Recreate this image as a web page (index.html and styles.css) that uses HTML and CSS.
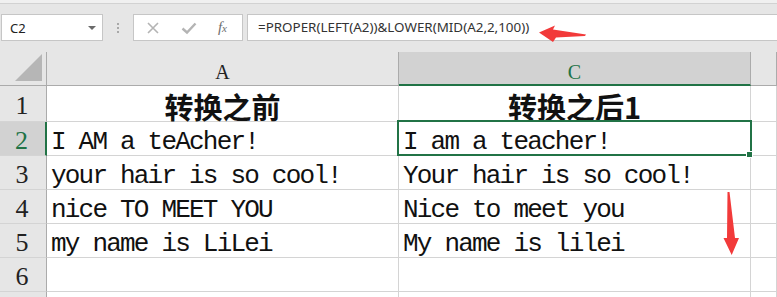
FILE: index.html
```html
<!DOCTYPE html>
<html lang="zh-CN">
<head>
    <meta charset="UTF-8">
    <meta name="viewport" content="width=device-width, initial-scale=1.0">
    <title>PROPER LEFT LOWER MID</title>
    <link rel="stylesheet" href="styles.css">
</head>
<body>

    <div class="Excel">

        <div class="Linea"></div>

        <div class="Barra">
            <div class="Nombre">
                <span>C2</span>
                <span class="Flecha"></span>
            </div>
            <div class="Puntos"><i></i><i></i><i></i></div>
            <div class="Funcion">
                <svg width="14" height="14" viewBox="0 0 14 14"><path d="M2 2 L12 12 M12 2 L2 12" stroke="#b4b4b4" stroke-width="1.6" fill="none"/></svg>
                <svg width="16" height="14" viewBox="0 0 16 14"><path d="M1.5 7.5 L6 11.5 L14.5 2.5" stroke="#b4b4b4" stroke-width="2.4" fill="none"/></svg>
                <span class="Fx">f<small>x</small></span>
            </div>
            <div class="Formula">=PROPER(LEFT(A2))&amp;LOWER(MID(A2,2,100))</div>
        </div>

        <div class="Hoja">
            <div class="Esquina"><span></span></div>
            <div class="Col">A</div>
            <div class="Col Activa">C</div>
            <div class="Col"></div>

            <div class="Fila">1</div>
            <div class="Titulo">转换之前</div>
            <div class="Titulo">转换之后1</div>
            <div class="Celda"></div>

            <div class="Fila Activa">2</div>
            <div class="Celda">I AM a teAcher!</div>
            <div class="Celda Sel">I am a teacher!</div>
            <div class="Celda"></div>

            <div class="Fila">3</div>
            <div class="Celda">your hair is so cool!</div>
            <div class="Celda">Your hair is so cool!</div>
            <div class="Celda"></div>

            <div class="Fila">4</div>
            <div class="Celda">nice TO MEET YOU</div>
            <div class="Celda">Nice to meet you</div>
            <div class="Celda"></div>

            <div class="Fila">5</div>
            <div class="Celda">my name is LiLei</div>
            <div class="Celda">My name is lilei</div>
            <div class="Celda"></div>

            <div class="Fila">6</div>
            <div class="Celda"></div>
            <div class="Celda"></div>
            <div class="Celda"></div>

            <div class="Fila"></div>
            <div class="Celda"></div>
            <div class="Celda"></div>
            <div class="Celda"></div>
        </div>

        <svg class="Notas" width="777" height="297" viewBox="0 0 777 297">
            <polygon points="539,32.5 555,25.5 553,29.5 586,34.5 585,36 556,37.5 553,42" fill="#f23a3a"/>
            <polygon points="727.5,192 729.5,192 735,238 739,238 731.7,255 723.5,238 727,238" fill="#f23a3a"/>
        </svg>

    </div>

</body>
</html>
```

FILE: styles.css
```css
body {
    margin: 0;
    background: #e6e6e6;
    overflow: hidden;
}

div.Excel {
    position: relative;
    width: 777px;
    height: 297px;
    overflow: hidden;
}

div.Linea {
    height: 3px;
    background: #f0f0f0;
    border-bottom: 1px solid #d2d2d2;
}

div.Barra {
    display: flex;
    align-items: center;
    height: 27px;
    margin-top: 10px;
    margin-bottom: 11px;
    padding-left: 1px;
    font-family: "Noto Sans", "Liberation Sans", sans-serif;
}

div.Barra > div {
    height: 27px;
    box-sizing: border-box;
}

div.Nombre {
    width: 102px;
    background: #ffffff;
    border: 1px solid #c6c6c6;
    display: flex;
    align-items: center;
    justify-content: space-between;
    padding: 0 6px 0 8px;
    font-size: 13px;
    color: #222222;
}

span.Flecha {
    width: 0px;
    height: 0px;
    border-left: 4px solid transparent;
    border-right: 4px solid transparent;
    border-top: 4px solid #6a6a6a;
}

div.Puntos {
    width: 30px;
    display: flex;
    flex-direction: column;
    align-items: flex-start;
    justify-content: center;
    padding-left: 14px;
    gap: 2px;
}

div.Puntos i {
    width: 2px;
    height: 2px;
    background: #a8a8a8;
}

div.Funcion {
    width: 110px;
    background: #ffffff;
    border: 1px solid #c6c6c6;
    display: flex;
    align-items: center;
    justify-content: space-between;
    padding: 0 15px 0 12px;
}

span.Fx {
    font-family: "Liberation Serif", serif;
    font-style: italic;
    font-size: 15px;
    color: #6e6e6e;
}

span.Fx small {
    font-size: 11px;
}

div.Formula {
    flex: 1;
    margin-left: 4px;
    background: #ffffff;
    border: 1px solid #c6c6c6;
    border-right: none;
    padding: 3px 0 0 10px;
    font-size: 13.4px;
    color: #333333;
}

div.Hoja {
    display: grid;
    grid-template-columns: 47px 352px 352px 1fr;
    grid-template-rows: 34px 36px repeat(6, 34px);
    background: #ffffff;
}

div.Hoja > div {
    box-sizing: border-box;
    border-right: 1px solid #d4d4d4;
    border-bottom: 1px solid #d4d4d4;
    display: flex;
    align-items: center;
    white-space: nowrap;
}

div.Hoja > div.Esquina {
    background: #e6e6e6;
    border-right: 1px solid #ababab;
    border-bottom: 1px solid #ababab;
    position: relative;
}

div.Esquina span {
    position: absolute;
    right: 4px;
    bottom: 4px;
    width: 0px;
    height: 0px;
    border-left: 27px solid transparent;
    border-bottom: 27px solid #b6b6b6;
}

div.Hoja > div.Col {
    background: #e6e6e6;
    border-right: 1px solid #ababab;
    border-bottom: 1px solid #ababab;
    justify-content: center;
    padding-top: 8px;
    font-family: "Liberation Serif", serif;
    font-size: 20px;
    color: #222222;
}

div.Hoja > div.Col.Activa {
    background: #d2d2d2;
    border-bottom: 2px solid #217346;
    color: #217346;
    padding-top: 9px;
}

div.Hoja > div.Fila {
    background: #e6e6e6;
    border-right: 1px solid #ababab;
    border-bottom: 1px solid #d4d4d4;
    justify-content: center;
    padding-top: 4px;
    padding-right: 2px;
    font-family: "Liberation Serif", serif;
    font-size: 26px;
    color: #222222;
}

div.Hoja > div.Fila.Activa {
    background: #d2d2d2;
    border-right: 2px solid #217346;
    color: #217346;
}

div.Hoja > div.Titulo {
    justify-content: center;
    padding-top: 4px;
    font-family: "Noto Sans CJK SC", sans-serif;
    font-weight: bold;
    font-size: 29px;
    color: #111111;
}

div.Hoja > div.Celda {
    padding: 7px 0 0 4px;
    font-family: "Liberation Mono", monospace;
    font-size: 26px;
    letter-spacing: -1.8px;
    color: #111111;
}

div.Hoja > div.Celda.Sel {
    position: relative;
}

div.Celda.Sel::after {
    content: "";
    position: absolute;
    left: -2px;
    top: -2px;
    right: -2px;
    bottom: -1px;
    border: 2px solid #217346;
}

div.Celda.Sel::before {
    content: "";
    position: absolute;
    right: -3px;
    bottom: -3px;
    width: 5px;
    height: 5px;
    background: #217346;
    border: 1px solid #ffffff;
    z-index: 2;
}

svg.Notas {
    position: absolute;
    left: 0px;
    top: 0px;
    pointer-events: none;
}
```
